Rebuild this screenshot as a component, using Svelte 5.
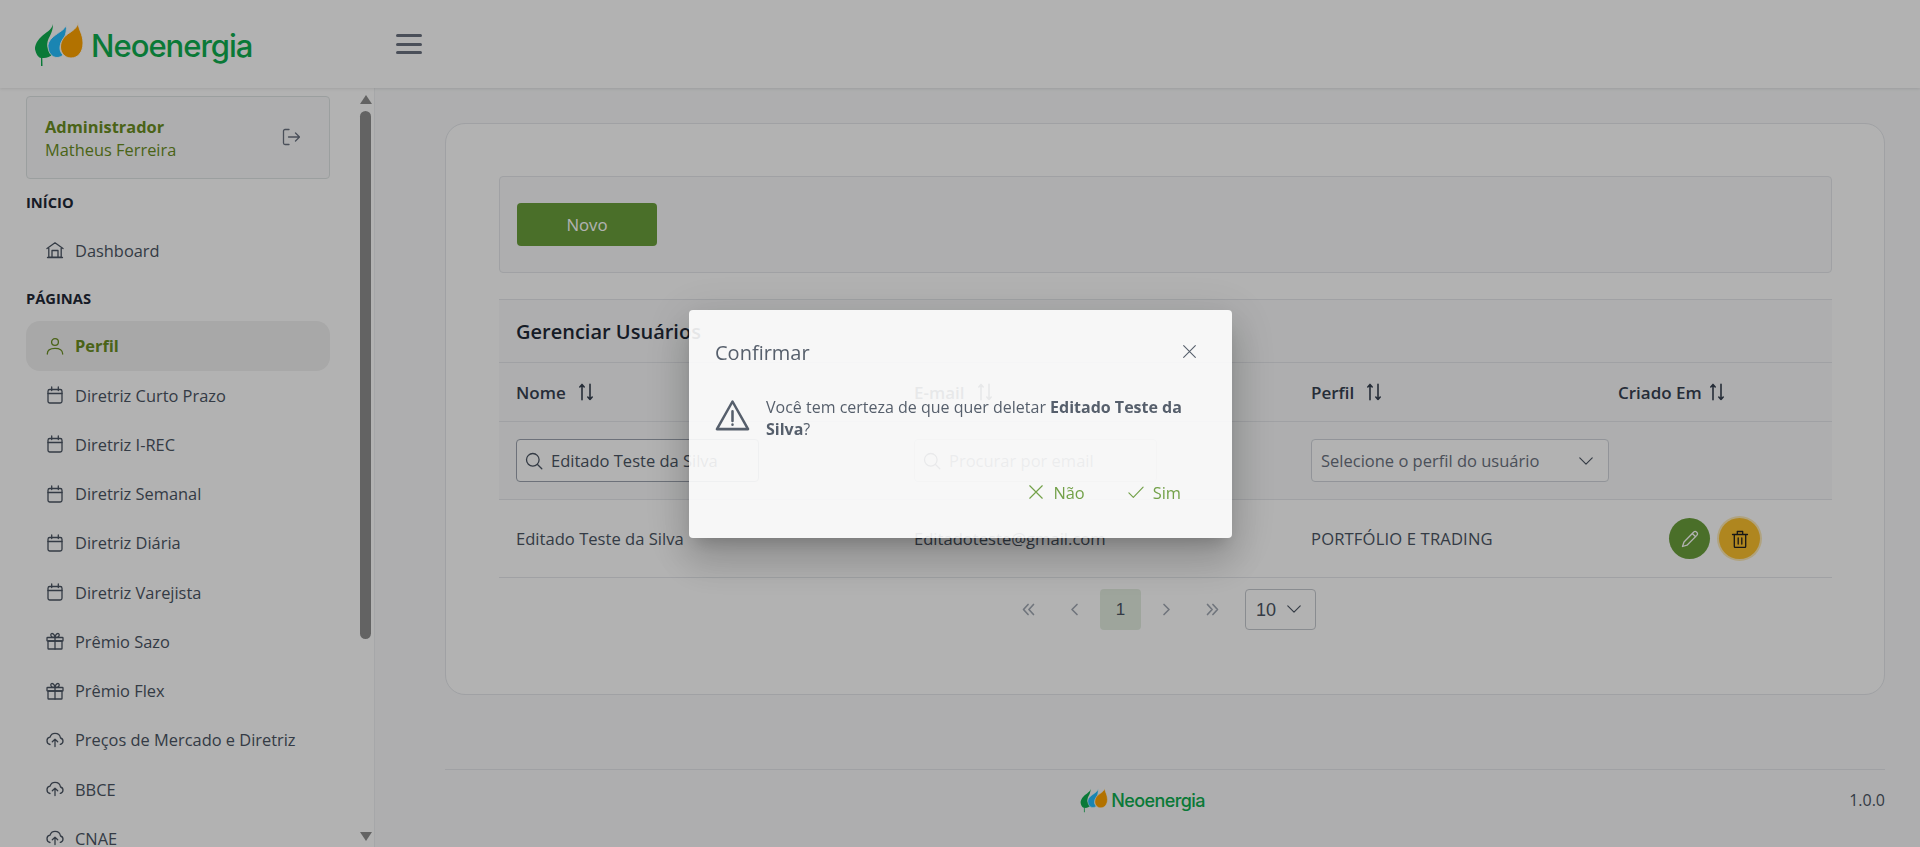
<script>
  const nav = [
    { icon: 'calendar', label: 'Diretriz Curto Prazo' },
    { icon: 'calendar', label: 'Diretriz I-REC' },
    { icon: 'calendar', label: 'Diretriz Semanal' },
    { icon: 'calendar', label: 'Diretriz Diária' },
    { icon: 'calendar', label: 'Diretriz Varejista' },
    { icon: 'gift', label: 'Prêmio Sazo' },
    { icon: 'gift', label: 'Prêmio Flex' },
    { icon: 'cloud', label: 'Preços de Mercado e Diretriz' },
    { icon: 'cloud', label: 'BBCE' },
    { icon: 'cloud', label: 'CNAE' }
  ];
</script>

{#snippet leaves()}
  <svg class="leaves" viewBox="34 20 50 46" aria-hidden="true">
    <path fill="#0fae50" d="M53 23C52 29 46 31 41 36C36 41 34 46 35.5 50C36.5 54 39 57 41 57L41 65L42.5 65L42.3 57C46 57.5 50 56 53 53C49 50 46.5 46 47.5 41C48.5 36 53 32 53 23Z"/>
    <path fill="#26bfff" stroke="#fff" stroke-width=".9" d="M66.5 23C65.5 28 61 30 55.5 34C50 38 47.5 42 48 46C48.5 52 52 56.5 57 56.5C59.5 56.5 61.5 55.5 63 54C60 51 59 47 61 42C62.5 38.500 67 36 66.5 23Z"/>
    <path fill="#ffa400" stroke="#fff" stroke-width=".9" d="M78 21.5C77.5 26 74.5 28.5 70 31.5C64 35 60.5 40 60.5 46C60.5 52 65 57 71 57C78 57 83 51 83 42C83 33 78.5 29 78 21.5Z"/>
  </svg>
{/snippet}

{#snippet icon(name)}
  <svg class="ico" viewBox="0 0 18 18" fill="none" stroke="currentColor" stroke-width="1.3" stroke-linecap="round" stroke-linejoin="round" aria-hidden="true">
    {#if name === 'home'}
      <path d="M1 7.500 9 1.800l8 5.700M2.800 7v9.200h12.400V7M1.500 16.500h15M6 16V9.500h6V16"/>
    {:else if name === 'user'}
      <circle cx="9" cy="5" r="3.4"/><path d="M1.3 17c0-3.8 3-5.6 7.7-5.6s7.700 1.800 7.700 5.600"/>
    {:else if name === 'calendar'}
      <rect x="2" y="3.500" width="14" height="13.500" rx="1.800"/><path d="M2 7.500h14M5.700 1v3.500M12.300 1v3.500"/>
    {:else if name === 'gift'}
      <rect x="1" y="5.500" width="16" height="3.500" rx=".6"/><rect x="2" y="9" width="14" height="8" rx=".6"/><path d="M9 5.500V17M9 5.500C7 5.500 4.800 4.800 4.800 3c0-2.300 3.400-2.300 4.200 2.500 .8-4.800 4.200-4.800 4.200-2.500 0 1.800-2.200 2.500-4.200 2.500Z"/>
    {:else if name === 'cloud'}
      <path d="M4 13.500C2.200 13.200 1 11.600 1 9.800 1 8 2.300 6.500 4 6.200 4.700 3.800 6.700 2.300 9 2.300c2.900 0 5.100 2 5.500 4.700 1.500.4 2.500 1.600 2.500 3.100 0 1.700-1 2.900-2.700 3.300M9 15.500V8.200M6.300 10.700 9 8.200l2.700 2.500"/>
    {:else if name === 'logout'}
      <path d="M7 1.500H3a1.500 1.500 0 0 0-1.500 1.500v12A1.500 1.500 0 0 0 3 16.500h4M6.500 9h11M13.500 5l4 4-4 4"/>
    {:else if name === 'search'}
      <circle cx="7.800" cy="7.800" r="6.300"/><path d="m12.500 12.500 4.300 4.300"/>
    {:else if name === 'chevron'}
      <path d="m2 5.500 7 7 7-7"/>
    {:else if name === 'sort'}
      <path d="M5 16.800V1.500M2.800 4 5 1.500 7.200 4M13 1.200v15.300M10.800 14 13 16.500 15.200 14"/>
    {:else if name === 'pencil'}
      <path d="M3 12 12.500 2.200a2.300 2.300 0 0 1 3.300 3.200L6 15.200l-4.500 1.300L3 12ZM11.300 3.500l3.300 3.200"/>
    {:else if name === 'trash'}
      <path d="M1.500 4.500h15M6.300 4.500V1.500h5.400v3M3.300 4.500v11.700a1.300 1.300 0 0 0 1.300 1.300h8.800a1.300 1.300 0 0 0 1.300-1.300V4.500M7.200 8v6M10.800 8v6"/>
    {:else if name === 'times'}
      <path d="m2 2 14 14M16 2 2 16"/>
    {:else if name === 'check'}
      <path d="m1 10 5 5L17 3.500"/>
    {:else if name === 'warn'}
      <path d="M9 1.800 1 16h16L9 1.800ZM9 6.800v5M9 13.600v.2"/>
    {:else if name === 'first'}
      <path d="M8.500 3 3 9l5.500 6M15 3 9.500 9l5.500 6"/>
    {:else if name === 'prev'}
      <path d="M12 3 6 9l6 6"/>
    {:else if name === 'next'}
      <path d="m6 3 6 6-6 6"/>
    {:else if name === 'last'}
      <path d="M3 3l5.500 6L3 15M9.500 3 15 9l-5.500 6"/>
    {/if}
  </svg>
{/snippet}

<div class="page">
  <header class="topbar">
    <div class="brand">
      {@render leaves()}
      <span class="brand-name">Neoenergia</span>
    </div>
    <button class="menu" aria-label="Menu"><span></span><span></span><span></span></button>
  </header>

  <div class="body">
    <aside class="sidebar">
      <nav class="nav">
        <div class="account">
          <div class="who">
            <strong>Administrador</strong>
            <span>Matheus Ferreira</span>
          </div>
          <span class="logout">{@render icon('logout')}</span>
        </div>
        <div class="section">INÍCIO</div>
        <a class="item" href="#/">{@render icon('home')}<span>Dashboard</span></a>
        <div class="section">PÁGINAS</div>
        <a class="item active" href="#/">{@render icon('user')}<span>Perfil</span></a>
        {#each nav as n}
          <a class="item" href="#/">{@render icon(n.icon)}<span>{n.label}</span></a>
        {/each}
      </nav>
      <div class="scrollbar">
        <i class="arrow up"></i>
        <i class="thumb"></i>
        <i class="arrow down"></i>
      </div>
    </aside>

    <main class="main">
      <section class="card">
        <div class="toolbar"><button class="novo">Novo</button></div>

        <div class="table">
          <h2 class="table-title">Gerenciar Usuários</h2>
          <div class="row head">
            <div>Nome <span class="sort">{@render icon('sort')}</span></div>
            <div>E-mail <span class="sort">{@render icon('sort')}</span></div>
            <div>Perfil <span class="sort">{@render icon('sort')}</span></div>
            <div>Criado Em <span class="sort tight">{@render icon('sort')}</span></div>
          </div>
          <div class="row filters">
            <div><label class="input filled">{@render icon('search')}<span>Editado Teste da Silva</span></label></div>
            <div><label class="input">{@render icon('search')}<span class="ph">Procurar por email</span></label></div>
            <div><div class="select"><span class="ph">Selecione o perfil do usuário</span>{@render icon('chevron')}</div></div>
            <div></div>
          </div>
          <div class="row data">
            <div>Editado Teste da Silva</div>
            <div>Editadoteste@gmail.com</div>
            <div class="caps">PORTFÓLIO E TRADING</div>
            <div class="actions">
              <button class="round edit" aria-label="Editar">{@render icon('pencil')}</button>
              <button class="round del" aria-label="Deletar">{@render icon('trash')}</button>
            </div>
          </div>
        </div>

        <div class="pager">
          <span class="pg">{@render icon('first')}</span>
          <span class="pg">{@render icon('prev')}</span>
          <span class="pg on">1</span>
          <span class="pg">{@render icon('next')}</span>
          <span class="pg">{@render icon('last')}</span>
          <div class="size"><span>10</span>{@render icon('chevron')}</div>
        </div>
      </section>

      <footer class="footer">
        <i></i>
        <div class="foot-logo">
          {@render leaves()}
          <span class="brand-name">Neoenergia</span>
        </div>
        <span class="version">1.0.0</span>
      </footer>
    </main>
  </div>

  <div class="mask">
    <div class="dialog" role="dialog">
      <div class="dlg-head">
        <span class="dlg-title">Confirmar</span>
        <span class="dlg-close">{@render icon('times')}</span>
      </div>
      <div class="dlg-body">
        <span class="dlg-warn">{@render icon('warn')}</span>
        <p>Você tem certeza de que quer deletar <b>Editado Teste da Silva</b>?</p>
      </div>
      <div class="dlg-foot">
        <button class="txt no">{@render icon('times')}<span>Não</span></button>
        <button class="txt yes">{@render icon('check')}<span>Sim</span></button>
      </div>
    </div>
  </div>
</div>

<style>
  :global(body) {
    margin: 0;
    background: #f9fafb;
  }
  .page {
    width: 1920px;
    height: 847px;
    overflow: hidden;
    font-family: "Open Sans", "Noto Sans", sans-serif;
    font-size: 16.400px;
    color: #4b5563;
    display: flex;
    flex-direction: column;
  }
  button {
    font: inherit;
    border: 0;
    background: none;
    padding: 0;
    color: inherit;
  }
  .ico {
    display: block;
    width: 18px;
    height: 18px;
    flex: none;
  }

  .topbar {
    height: 88px;
    flex: none;
    background: #fff;
    display: flex;
    align-items: center;
    box-shadow: 0 1px 3px rgba(0, 0, 0, .1);
    position: relative;
    z-index: 1;
  }
  .brand {
    width: 396px;
    padding-left: 34px;
    box-sizing: border-box;
    display: flex;
    align-items: center;
    gap: 7px;
    flex: none;
    height: 88px;
  }
  .leaves {
    width: 50px;
    height: 46px;
    flex: none;
  }
  .brand-name {
    font-family: "Inter", "Liberation Sans", sans-serif;
    font-size: 31px;
    font-weight: 500;
    color: #0fae50;
    letter-spacing: -1px;
    line-height: 1;
    padding-top: 3px;
  }
  .menu {
    width: 26px;
    height: 20px;
    display: flex;
    flex-direction: column;
    justify-content: space-between;
  }
  .menu span {
    display: block;
    height: 3px;
    border-radius: 2px;
    background: #6b7280;
  }

  .body {
    flex: 1;
    min-height: 0;
    display: flex;
  }
  .sidebar {
    width: 375px;
    flex: none;
    background: #fff;
    display: flex;
    border-right: 1px solid #eef0f2;
    box-sizing: border-box;
  }
  .nav {
    width: 358px;
    flex: none;
    padding: 8px 28px 0 26px;
    box-sizing: border-box;
    overflow: hidden;
  }
  .account {
    height: 83px;
    box-sizing: border-box;
    border: 1px solid #dfe4e4;
    border-radius: 4px;
    background: #f9fafb;
    display: flex;
    align-items: center;
    justify-content: space-between;
    padding: 0 29px 0 18px;
    color: #6b8e23;
  }
  .who {
    display: flex;
    flex-direction: column;
    line-height: 23px;
  }
  .who strong {
    font-weight: 700;
  }
  .logout {
    color: #6b7280;
    margin-top: -2px;
  }
  .section {
    height: 20px;
    line-height: 20px;
    margin: 13px 0 13.500px;
    font-size: 14.700px;
    font-weight: 700;
    color: #1f2937;
  }
  .item {
    height: 49.250px;
    display: flex;
    align-items: center;
    gap: 11px;
    padding-left: 20px;
    color: #4b5563;
    text-decoration: none;
    border-radius: 14px;
    box-sizing: border-box;
  }
  .item.active {
    background: #f1f1f1;
    color: #6b8e23;
    font-weight: 700;
  }
  .scrollbar {
    width: 15px;
    flex: none;
    display: flex;
    flex-direction: column;
    align-items: center;
    padding: 7px 0 6px;
    box-sizing: border-box;
  }
  .arrow {
    width: 0;
    height: 0;
    border-left: 6.500px solid transparent;
    border-right: 6.500px solid transparent;
  }
  .arrow.up {
    border-bottom: 9px solid #8f8f8f;
  }
  .arrow.down {
    border-top: 9px solid #8f8f8f;
    margin-top: auto;
  }
  .thumb {
    width: 11px;
    height: 528px;
    margin-top: 7px;
    border-radius: 6px;
    background: #8f8f8f;
  }

  .main {
    flex: 1;
    min-width: 0;
    padding: 35px 35px 0 70px;
    background: #f9fafb;
  }
  .card {
    height: 572px;
    box-sizing: border-box;
    background: #fff;
    border: 1px solid #e5e7eb;
    border-radius: 20px;
    padding: 52px 52px 0 53px;
  }
  .toolbar {
    height: 97px;
    box-sizing: border-box;
    background: #f9fafb;
    border: 1px solid #e5e7eb;
    border-radius: 4px;
    padding: 26px 17px;
  }
  .novo {
    width: 140px;
    height: 43px;
    border-radius: 4px;
    background: #6b9f3c;
    color: #fff;
    font-size: 16.800px;
  }

  .table {
    margin-top: 26px;
    color: #4b5563;
    font-size: 16.600px;
  }
  .table-title {
    margin: 0;
    height: 64px;
    box-sizing: border-box;
    padding: 0 17px;
    display: flex;
    align-items: center;
    background: #f9fafb;
    border: solid #e5e7eb;
    border-width: 1px 0;
    font-size: 20px;
    font-weight: 600;
    color: #1f2937;
  }
  .row {
    display: grid;
    grid-template-columns: 398px 397px 307px 1fr;
    border-bottom: 1px solid #e5e7eb;
    box-sizing: border-box;
    align-items: center;
  }
  .row > div {
    padding: 0 17px;
    min-width: 0;
  }
  .head {
    height: 59px;
    background: #f9fafb;
    font-size: 17px;
    font-weight: 600;
    color: #374151;
  }
  .head > div {
    display: flex;
    align-items: center;
  }
  .sort {
    margin-left: 11px;
    display: block;
  }
  .sort .ico {
    stroke-width: 1.600;
  }
  .sort.tight {
    margin-left: 6px;
  }
  .filters {
    height: 78px;
    background: #f9fafb;
  }
  .input, .select {
    height: 43px;
    box-sizing: border-box;
    border: 1px solid #d1d5db;
    border-radius: 4px;
    background: #fff;
    display: flex;
    align-items: center;
    font-size: 16.500px;
  }
  .input {
    width: 243px;
    gap: 8px;
    padding: 0 8px;
    overflow: hidden;
    white-space: nowrap;
  }
  .input.filled {
    border-color: #9ca3af;
  }
  .ph {
    color: #6b7280;
  }
  .select {
    width: 298px;
    justify-content: space-between;
    padding: 0 14px 0 9px;
  }
  .select .ico {
    width: 16px;
    height: 16px;
  }
  .data {
    height: 78px;
  }
  .caps {
    letter-spacing: .15px;
  }
  .actions {
    display: flex;
    gap: 9px;
    padding-left: 68px !important;
  }
  .round {
    width: 41px;
    height: 41px;
    border-radius: 50%;
    display: flex;
    align-items: center;
    justify-content: center;
  }
  .edit {
    background: #6b9f3c;
    color: #fff;
  }
  .del {
    background: #fbc02d;
    color: #212121;
    box-shadow: 0 0 0 2px #fdeab7;
  }

  .pager {
    display: flex;
    align-items: center;
    gap: 5px;
    margin-top: 11px;
    padding-left: 509px;
  }
  .pg {
    width: 41px;
    height: 41px;
    border-radius: 4px;
    display: flex;
    align-items: center;
    justify-content: center;
    color: #a1a8b3;
    font-family: "Liberation Sans", sans-serif;
    font-size: 17px;
  }
  .pg .ico {
    width: 15px;
    height: 15px;
    stroke-width: 2;
  }
  .pg.on {
    background: #e3ede0;
    color: #4b5563;
  }
  .size {
    margin-left: 7px;
    width: 71px;
    height: 41px;
    box-sizing: border-box;
    border: 1px solid #c5c9cf;
    border-radius: 4px;
    display: flex;
    align-items: center;
    justify-content: space-between;
    padding: 2px 13px 0 10px;
    font-family: "Liberation Sans", sans-serif;
    font-size: 18px;
  }
  .size .ico {
    width: 16px;
    height: 16px;
    margin-top: -4px;
  }

  .footer {
    margin-top: 74px;
    border-top: 1px solid #e5e7eb;
    height: 60px;
    display: flex;
    align-items: center;
    justify-content: space-between;
  }
  .foot-logo {
    display: flex;
    align-items: center;
    gap: 3px;
    margin-left: -9px;
  }
  .foot-logo .leaves {
    width: 28px;
    height: 26px;
  }
  .foot-logo .brand-name {
    font-size: 18px;
    letter-spacing: -.6px;
    padding-top: 1px;
  }
  .version {
    font-size: 16px;
  }

  .mask {
    position: fixed;
    inset: 0;
    background: rgba(0, 0, 0, .3);
    display: flex;
    align-items: center;
    justify-content: center;
    z-index: 5;
  }
  .dialog {
    width: 543px;
    height: 228px;
    margin-left: 1px;
    box-sizing: border-box;
    background: #fff;
    opacity: .89;
    border-radius: 4px;
    padding: 0 26px;
    box-shadow: 0 11px 15px -7px rgba(0, 0, 0, .2), 0 24px 38px 3px rgba(0, 0, 0, .14), 0 9px 46px 8px rgba(0, 0, 0, .12);
    display: flex;
    flex-direction: column;
  }
  .dlg-head {
    height: 86px;
    flex: none;
    display: flex;
    align-items: center;
    justify-content: space-between;
  }
  .dlg-title {
    font-size: 20px;
    font-weight: 500;
  }
  .dlg-close .ico {
    width: 15px;
    height: 15px;
    margin: -2px 9px 0 0;
  }
  .dlg-body {
    display: flex;
    align-items: center;
    gap: 16px;
  }
  .dlg-warn {
    margin-top: -6px;
  }
  .dlg-warn .ico {
    width: 35px;
    height: 35px;
  }
  .dlg-body p {
    margin: 0;
    line-height: 22.500px;
    font-size: 16px;
  }
  .dlg-body b {
    font-weight: 700;
  }
  .dlg-foot {
    display: flex;
    justify-content: flex-end;
    gap: 43px;
    margin-top: 40px;
    padding-right: 25px;
  }
  .txt {
    display: flex;
    align-items: center;
    gap: 9px;
    color: #6b9f3c;
  }
  .txt .ico {
    width: 16px;
    height: 16px;
  }
</style>
